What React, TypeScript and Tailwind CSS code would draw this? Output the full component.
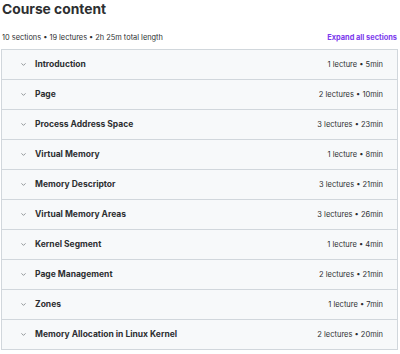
import React from "react";

type Section = {
  title: string;
  lectures: number;
  minutes: number;
};

const sections: Section[] = [
  { title: "Introduction", lectures: 1, minutes: 5 },
  { title: "Page", lectures: 2, minutes: 10 },
  { title: "Process Address Space", lectures: 3, minutes: 23 },
  { title: "Virtual Memory", lectures: 1, minutes: 8 },
  { title: "Memory Descriptor", lectures: 3, minutes: 21 },
  { title: "Virtual Memory Areas", lectures: 3, minutes: 26 },
  { title: "Kernel Segment", lectures: 1, minutes: 4 },
  { title: "Page Management", lectures: 2, minutes: 21 },
  { title: "Zones", lectures: 1, minutes: 7 },
  { title: "Memory Allocation in Linux Kernel", lectures: 2, minutes: 20 },
];

function Chevron() {
  return (
    <svg width="7" height="7" viewBox="0 0 24 24" fill="none" stroke="#6a6f73" strokeWidth="2.5" strokeLinecap="round" strokeLinejoin="round">
      <path d="M6 9l6 6 6-6" />
    </svg>
  );
}

export default function App() {
  return (
    <div className="w-[400px] h-[354px] bg-white text-[#2d2f31] overflow-hidden" style={{ fontFamily: "Inter, 'Noto Sans', sans-serif" }}>
      {/* Header */}
      <h2 className="pl-[2px] text-[13.8px] leading-[18px] font-bold">Course content</h2>
      <div className="flex items-center justify-between pl-[2px] pr-[3px] mt-[15px] h-[10px]">
        <span className="text-[7.4px] leading-[10px] text-[#2d2f31]">10 sections • 19 lectures • 2h 25m total length</span>
        <span className="text-[7.4px] leading-[10px] font-bold text-[#7c3aed]">Expand all sections</span>
      </div>

      {/* Section list */}
      <div className="mt-[6px] ml-[1px] w-[397px] border border-[#d1d7dc]">
        {sections.map((s, i) => (
          <div
            key={s.title}
            className={
              "flex items-center h-[29px] bg-[#f7f9fa] pl-[18px] pr-[14px] " +
              (i > 0 ? "border-t border-[#d1d7dc] h-[30px]" : "")
            }
          >
            <Chevron />
            <span className="ml-[8px] text-[8.5px] font-bold flex-1">{s.title}</span>
            <span className="text-[7.5px] text-[#2d2f31]">
              {s.lectures} {s.lectures === 1 ? "lecture" : "lectures"} • {s.minutes}min
            </span>
          </div>
        ))}
      </div>
    </div>
  );
}
